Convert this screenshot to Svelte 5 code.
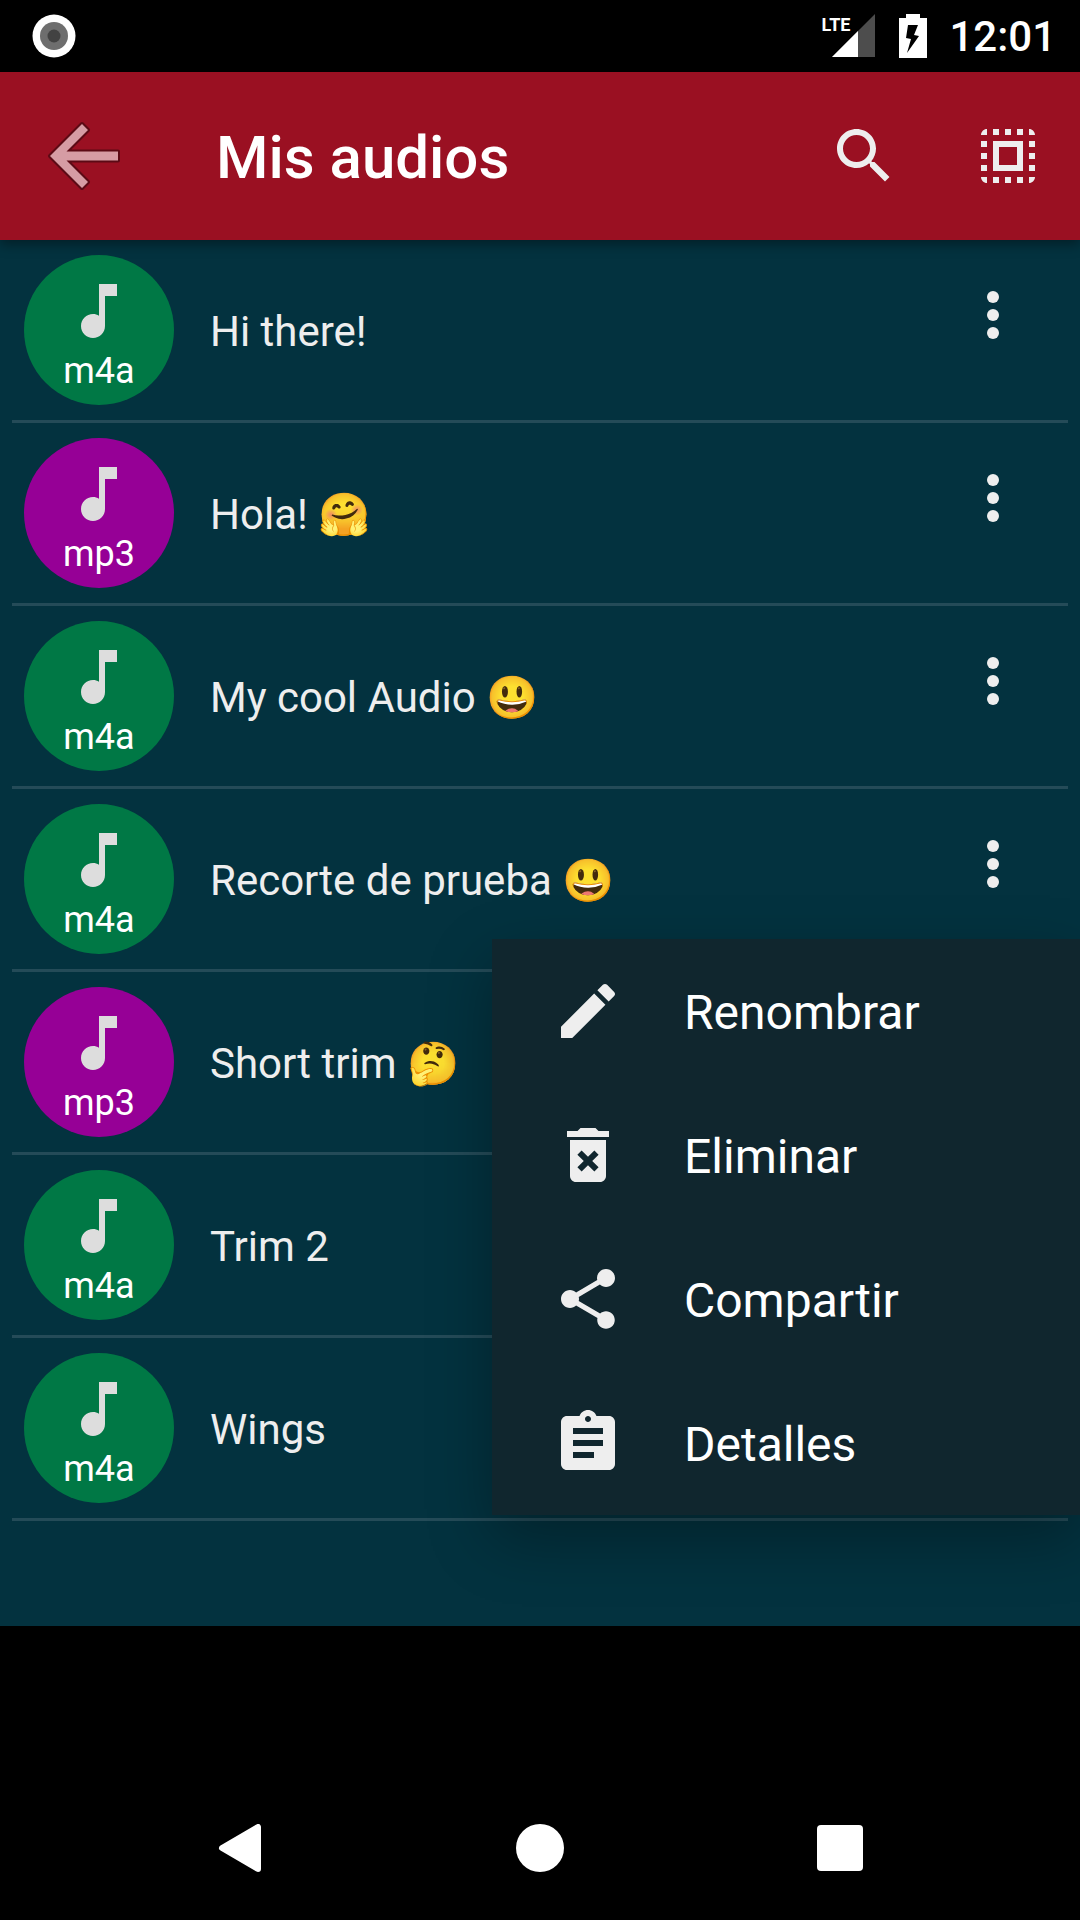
<script lang="ts">
    let menuOpen = true;

    let audios = [
        { name: "Hi there!", ext: "m4a" },
        { name: "Hola! 🤗", ext: "mp3" },
        { name: "My cool Audio 😃", ext: "m4a" },
        { name: "Recorte de prueba 😃", ext: "m4a" },
        { name: "Short trim 🤔", ext: "mp3" },
        { name: "Trim 2", ext: "m4a" },
        { name: "Wings", ext: "m4a" },
    ];

    // index of the audio the popup belongs to
    let selected = 3;

    const actions = [
        {
            label: "Renombrar",
            icon: "M3 17.25V21h3.75L17.81 9.94l-3.75-3.75L3 17.25zM20.71 7.04c.39-.39.39-1.02 0-1.41l-2.34-2.34c-.39-.39-1.02-.39-1.41 0l-1.83 1.83 3.75 3.75 1.83-1.83z",
        },
        {
            label: "Eliminar",
            icon: "M6 19c0 1.1.9 2 2 2h8c1.1 0 2-.9 2-2V7H6v12zm2.46-7.12l1.41-1.41L12 12.59l2.12-2.12 1.41 1.41L13.41 14l2.12 2.12-1.41 1.41L12 15.41l-2.12 2.12-1.41-1.41L10.59 14l-2.13-2.12zM15.5 4l-1-1h-5l-1 1H5v2h14V4z",
        },
        {
            label: "Compartir",
            icon: "M18 16.08c-.76 0-1.44.3-1.96.77L8.91 12.7c.05-.23.09-.46.09-.7s-.04-.47-.09-.7l7.05-4.11c.54.5 1.25.81 2.04.81 1.66 0 3-1.34 3-3s-1.34-3-3-3-3 1.34-3 3c0 .24.04.47.09.7L8.04 9.81C7.5 9.31 6.79 9 6 9c-1.66 0-3 1.34-3 3s1.34 3 3 3c.79 0 1.5-.31 2.04-.81l7.12 4.16c-.05.21-.08.43-.08.65 0 1.61 1.31 2.92 2.92 2.92s2.92-1.31 2.92-2.92-1.31-2.92-2.92-2.92z",
        },
        {
            label: "Detalles",
            icon: "M19 3h-4.18C14.4 1.84 13.3 1 12 1c-1.3 0-2.4.84-2.82 2H5c-1.1 0-2 .9-2 2v14c0 1.1.9 2 2 2h14c1.1 0 2-.9 2-2V5c0-1.1-.9-2-2-2zm-7 0c.55 0 1 .45 1 1s-.45 1-1 1-1-.45-1-1 .45-1 1-1zm2 14H7v-2h7v2zm3-4H7v-2h10v2zm0-4H7V7h10v2z",
        },
    ];

    function toggleMenu(i: number) {
        menuOpen = !(menuOpen && selected === i);
        selected = i;
    }
</script>

<div class="screen">
    <div class="status">
        <svg class="record" viewBox="0 0 44 44">
            <circle cx="22" cy="22" r="21.5" fill="#fff" />
            <circle cx="22" cy="22" r="14" fill="#6e6e6e" />
            <circle cx="22" cy="22" r="6.5" fill="#424242" />
        </svg>
        <div class="signal">
            <svg viewBox="0 0 54 44">
                <path d="M54 0v43H11z" fill="#4d4d4d" />
                <path d="M37 17v26H11z" fill="#fff" />
            </svg>
            <span class="lte">LTE</span>
        </div>
        <svg class="battery" viewBox="0 0 28 44">
            <path d="M7 0h14v4h7v40H0V4h7z" fill="#fff" />
            <path d="M9 11h10l-4 10 5 1L8 39l4-14-5-1z" fill="#000" />
        </svg>
        <span class="clock">12:01</span>
    </div>

    <header class="appbar">
        <button class="icon-btn" aria-label="Atrás">
            <svg viewBox="0 0 72 72">
                <path class="arrow" d="M2 36L34 4l6 6-21.5 21.5H70v9H18.500L40 62l-6 6z" />
            </svg>
        </button>
        <h1>Mis audios</h1>
        <button class="icon-btn" aria-label="Buscar">
            <svg viewBox="0 0 24 24">
                <path d="M15.5 14h-.79l-.28-.27C15.41 12.59 16 11.11 16 9.5 16 5.91 13.09 3 9.5 3S3 5.91 3 9.5 5.91 16 9.5 16c1.61 0 3.09-.59 4.23-1.57l.27.28v.79l5 4.99L20.49 19l-4.99-5zm-6 0C7.01 14 5 11.99 5 9.5S7.01 5 9.5 5 14 7.01 14 9.5 11.99 14 9.5 14z" />
            </svg>
        </button>
        <button class="icon-btn" aria-label="Seleccionar todo">
            <svg viewBox="0 0 24 24">
                <path d="M3 5h2V3c-1.1 0-2 .9-2 2zm0 8h2v-2H3v2zm4 8h2v-2H7v2zM3 9h2V7H3v2zm10-6h-2v2h2V3zm6 0v2h2c0-1.1-.9-2-2-2zM5 21v-2H3c0 1.1.9 2 2 2zm-2-4h2v-2H3v2zM9 3H7v2h2V3zm2 18h2v-2h-2v2zm8-8h2v-2h-2v2zm0 8c1.1 0 2-.9 2-2h-2v2zm0-12h2V7h-2v2zm0 8h2v-2h-2v2zm-4 4h2v-2h-2v2zm0-16h2V3h-2v2zM7 17h10V7H7v10zm2-8h6v6H9V9z" />
            </svg>
        </button>
    </header>

    <main>
        <ul class="list">
            {#each audios as audio, i}
                <li class="row">
                    <div class="badge" class:mp3={audio.ext === "mp3"}>
                        <svg viewBox="0 0 24 24">
                            <path d="M12 3v10.55c-.59-.34-1.27-.55-2-.55-2.21 0-4 1.79-4 4s1.79 4 4 4 4-1.79 4-4V7h4V3z" />
                        </svg>
                        <span>{audio.ext}</span>
                    </div>
                    <span class="name">{audio.name}</span>
                    <button class="more" aria-label="Opciones de {audio.name}" on:click={() => toggleMenu(i)}>
                        <svg viewBox="0 0 24 24">
                            <circle cx="12" cy="6" r="2" />
                            <circle cx="12" cy="12" r="2" />
                            <circle cx="12" cy="18" r="2" />
                        </svg>
                    </button>
                    {#if menuOpen && selected === i}
                        <div class="menu">
                            {#each actions as action}
                                <button class="item" on:click={() => (menuOpen = false)}>
                                    <svg viewBox="0 0 24 24"><path d={action.icon} /></svg>
                                    <span>{action.label}</span>
                                </button>
                            {/each}
                        </div>
                    {/if}
                </li>
            {/each}
        </ul>
    </main>

    <div class="ad"></div>

    <nav class="navbar">
        <button aria-label="Volver">
            <svg viewBox="0 0 48 48"><path d="M42 3v42L6 24z" stroke="#fff" stroke-width="6" stroke-linejoin="round" /></svg>
        </button>
        <button aria-label="Inicio">
            <svg viewBox="0 0 48 48"><circle cx="24" cy="24" r="24" /></svg>
        </button>
        <button aria-label="Recientes">
            <svg viewBox="0 0 48 48"><rect x="1" y="1" width="46" height="46" rx="4" /></svg>
        </button>
    </nav>
</div>

<style>
    :global(body) {
        margin: 0;
        background: #000;
    }

    .screen {
        display: flex;
        flex-direction: column;
        min-height: 100vh;
        background: #000;
        color: #fff;
        font-family: Roboto, "Noto Color Emoji", sans-serif;
        overflow: hidden;
    }

    button {
        display: flex;
        align-items: center;
        margin: 0;
        padding: 0;
        border: none;
        background: none;
        color: inherit;
        font: inherit;
        cursor: pointer;
    }

    svg {
        display: block;
        fill: #eee;
    }

    .status {
        display: flex;
        align-items: center;
        height: 72px;
        padding: 0 24px 0 32px;
    }

    .record {
        width: 44px;
        height: 44px;
        margin-right: auto;
    }

    .signal {
        position: relative;
        margin-right: 24px;
    }

    .signal svg {
        width: 54px;
        height: 44px;
    }

    .lte {
        position: absolute;
        top: 0;
        left: 0;
        font-size: 18px;
        line-height: 22px;
        font-weight: bold;
    }

    .battery {
        width: 28px;
        height: 44px;
        margin-right: 22px;
    }

    .clock {
        font-size: 42px;
        font-weight: 500;
    }

    .appbar {
        position: relative;
        z-index: 1;
        display: flex;
        align-items: center;
        height: 168px;
        padding: 0 36px 0 48px;
        background: #9a1022;
        box-shadow: 0 4px 12px rgba(0, 0, 0, 0.4);
    }

    h1 {
        flex: 1;
        margin: 0 0 0 96px;
        padding-top: 2px;
        font-size: 60px;
        font-weight: 500;
    }

    .icon-btn svg {
        width: 72px;
        height: 72px;
        overflow: visible;
    }

    .icon-btn + .icon-btn {
        margin-left: 72px;
    }

    /* dark rim sits behind the fill */
    .arrow {
        fill: #d69ca4;
        stroke: #5c0a15;
        stroke-width: 4px;
        stroke-linejoin: round;
        paint-order: stroke;
    }

    main {
        padding-bottom: 105px;
        background: #03323f;
    }

    .list {
        margin: 0;
        padding: 0 12px;
        list-style: none;
    }

    .row {
        position: relative;
        display: flex;
        align-items: center;
        height: 180px;
        padding: 0 39px 0 12px;
        border-bottom: 3px solid #244b58;
    }

    .badge {
        display: flex;
        flex-direction: column;
        align-items: center;
        width: 150px;
        height: 150px;
        padding-top: 20px;
        box-sizing: border-box;
        border-radius: 50%;
        background: #007845;
        font-size: 36px;
        line-height: 48px;
    }

    .badge.mp3 {
        background: #960096;
    }

    .badge svg {
        width: 72px;
        height: 72px;
        fill: #ddd;
    }

    .name {
        flex: 1;
        margin-left: 36px;
        padding-top: 4px;
        color: #eee;
        font-size: 42px;
        line-height: 48px;
    }

    .more {
        align-self: flex-start;
        height: 150px;
    }

    .more svg {
        width: 72px;
        height: 72px;
    }

    .menu {
        position: absolute;
        top: 150px;
        right: -12px;
        z-index: 2;
        width: 588px;
        background: #10262e;
        box-shadow: 0 24px 60px rgba(0, 0, 0, 0.3);
    }

    .item {
        gap: 60px;
        width: 100%;
        height: 144px;
        padding: 0 60px;
        font-size: 48px;
    }

    .item span {
        padding-top: 2px;
    }

    .item svg {
        width: 72px;
        height: 72px;
    }

    .ad {
        flex: 1;
    }

    .navbar {
        display: flex;
        justify-content: center;
        gap: 252px;
        height: 144px;
    }

    .navbar svg {
        width: 48px;
        height: 48px;
        fill: #fff;
    }
</style>
